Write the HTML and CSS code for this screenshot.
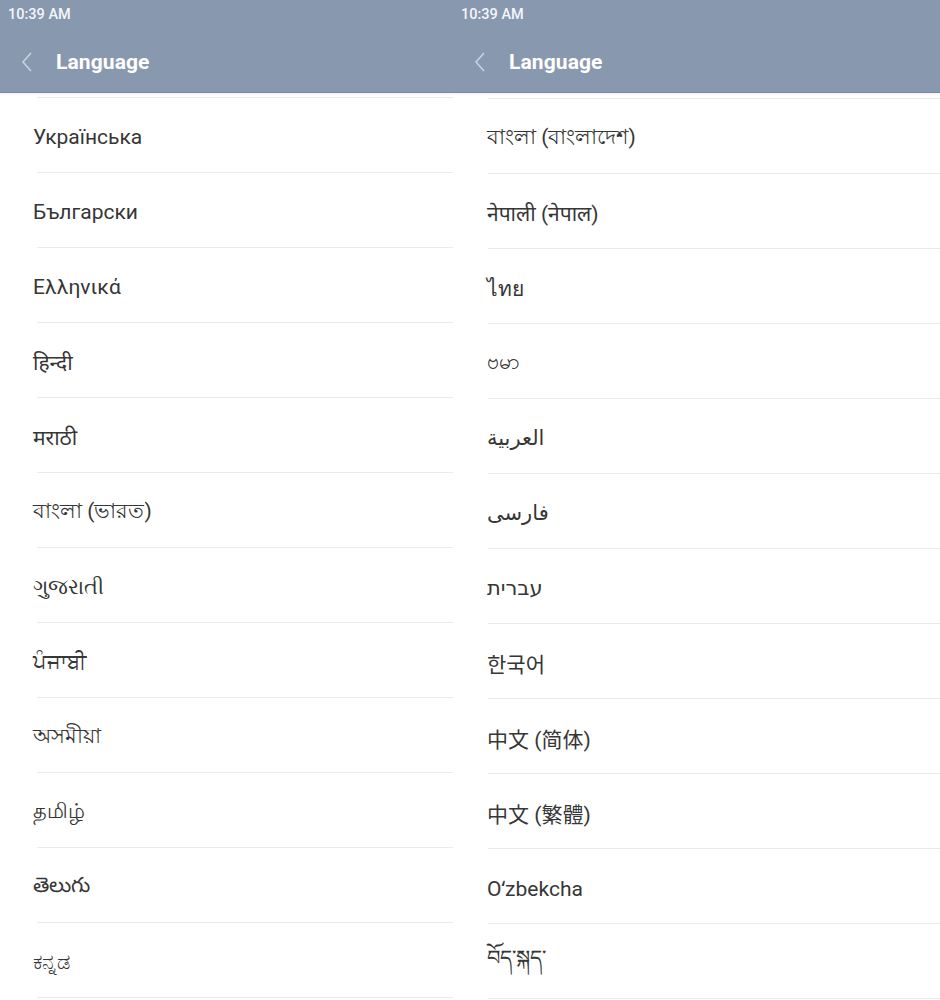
FILE: index.html
```html
<!DOCTYPE html>
<html>
<head>
<meta charset="utf-8">
<link rel="stylesheet" href="styles.css">
</head>
<body>
<div class="screens">
  <section class="phone phone-left">
    <header class="appbar">
      <div class="status">10:39 AM</div>
      <div class="toolbar">
        <svg class="back" width="14" height="22" viewBox="0 0 14 22"><path d="M11 2 L3 11 L11 20" fill="none" stroke="#c9d1dd" stroke-width="1.6"/></svg>
        <span class="title">Language</span>
      </div>
    </header>
    <ul class="list">
      <li>Українська</li>
      <li>Български</li>
      <li>Ελληνικά</li>
      <li>हिन्दी</li>
      <li>मराठी</li>
      <li>বাংলা (ভারত)</li>
      <li>ગુજરાતી</li>
      <li>ਪੰਜਾਬੀ</li>
      <li>অসমীয়া</li>
      <li>தமிழ்</li>
      <li>తెలుగు</li>
      <li>ಕನ್ನಡ</li>
      <li></li>
    </ul>
  </section>
  <section class="phone phone-right">
    <header class="appbar">
      <div class="status">10:39 AM</div>
      <div class="toolbar">
        <svg class="back" width="14" height="22" viewBox="0 0 14 22"><path d="M11 2 L3 11 L11 20" fill="none" stroke="#c9d1dd" stroke-width="1.6"/></svg>
        <span class="title">Language</span>
      </div>
    </header>
    <ul class="list">
      <li>বাংলা (বাংলাদেশ)</li>
      <li>नेपाली (नेपाल)</li>
      <li>ไทย</li>
      <li>ဗမာ</li>
      <li>العربية</li>
      <li>فارسی</li>
      <li>עברית</li>
      <li>한국어</li>
      <li>中文 (简体)</li>
      <li>中文 (繁體)</li>
      <li>Oʻzbekcha</li>
      <li>བོད་སྐད་</li>
      <li></li>
    </ul>
  </section>
</div>
</body>
</html>
```

FILE: styles.css
```css
* { box-sizing: border-box; }
html, body { margin: 0; padding: 0; background: #fff; }
body {
  width: 940px;
  height: 1000px;
  overflow: hidden;
  font-family: Roboto, "Noto Sans", "Noto Sans CJK KR", "Noto Sans CJK SC", "DejaVu Sans", sans-serif;
}
.screens {
  display: flex;
  height: 1000px;
}
.phone {
  display: flex;
  flex-direction: column;
  overflow: hidden;
  background: #fff;
}
.phone-left { width: 453px; }
.phone-right { width: 487px; }
.appbar {
  background: #8898af;
  height: 93px;
  flex: none;
  border-bottom: 1px solid #7a8aa2;
  box-shadow: 0 1px 2px rgba(0,0,0,0.08);
  position: relative;
  z-index: 1;
}
.status {
  height: 28px;
  padding-left: 8px;
  padding-top: 7px;
  color: #f4f6f9;
  font-size: 14.5px;
  font-weight: 500;
  line-height: 16px;
}
.toolbar {
  height: 64px;
  display: flex;
  align-items: center;
  padding-left: 20px;
  gap: 22px;
  padding-top: 4px;
}
.back { flex: none; }
.title {
  color: #fff;
  font-size: 21px;
  font-weight: 700;
  letter-spacing: 0.1px;
}
.list {
  list-style: none;
  margin: 0;
  padding: 4px 0 0 0;
}
.phone-right .list { padding-top: 5px; }
.list li {
  height: 75px;
  display: flex;
  align-items: center;
  padding-top: 5px;
  font-size: 21px;
  color: #363636;
  position: relative;
}
.list li::before {
  content: "";
  position: absolute;
  top: 0;
  left: 37px;
  right: 0;
  border-top: 1px solid #ebebeb;
}
.phone-left .list li { padding-left: 33px; }
.phone-right .list li { padding-left: 34px; }
.phone-right .list li::before { left: 35px; }
```
